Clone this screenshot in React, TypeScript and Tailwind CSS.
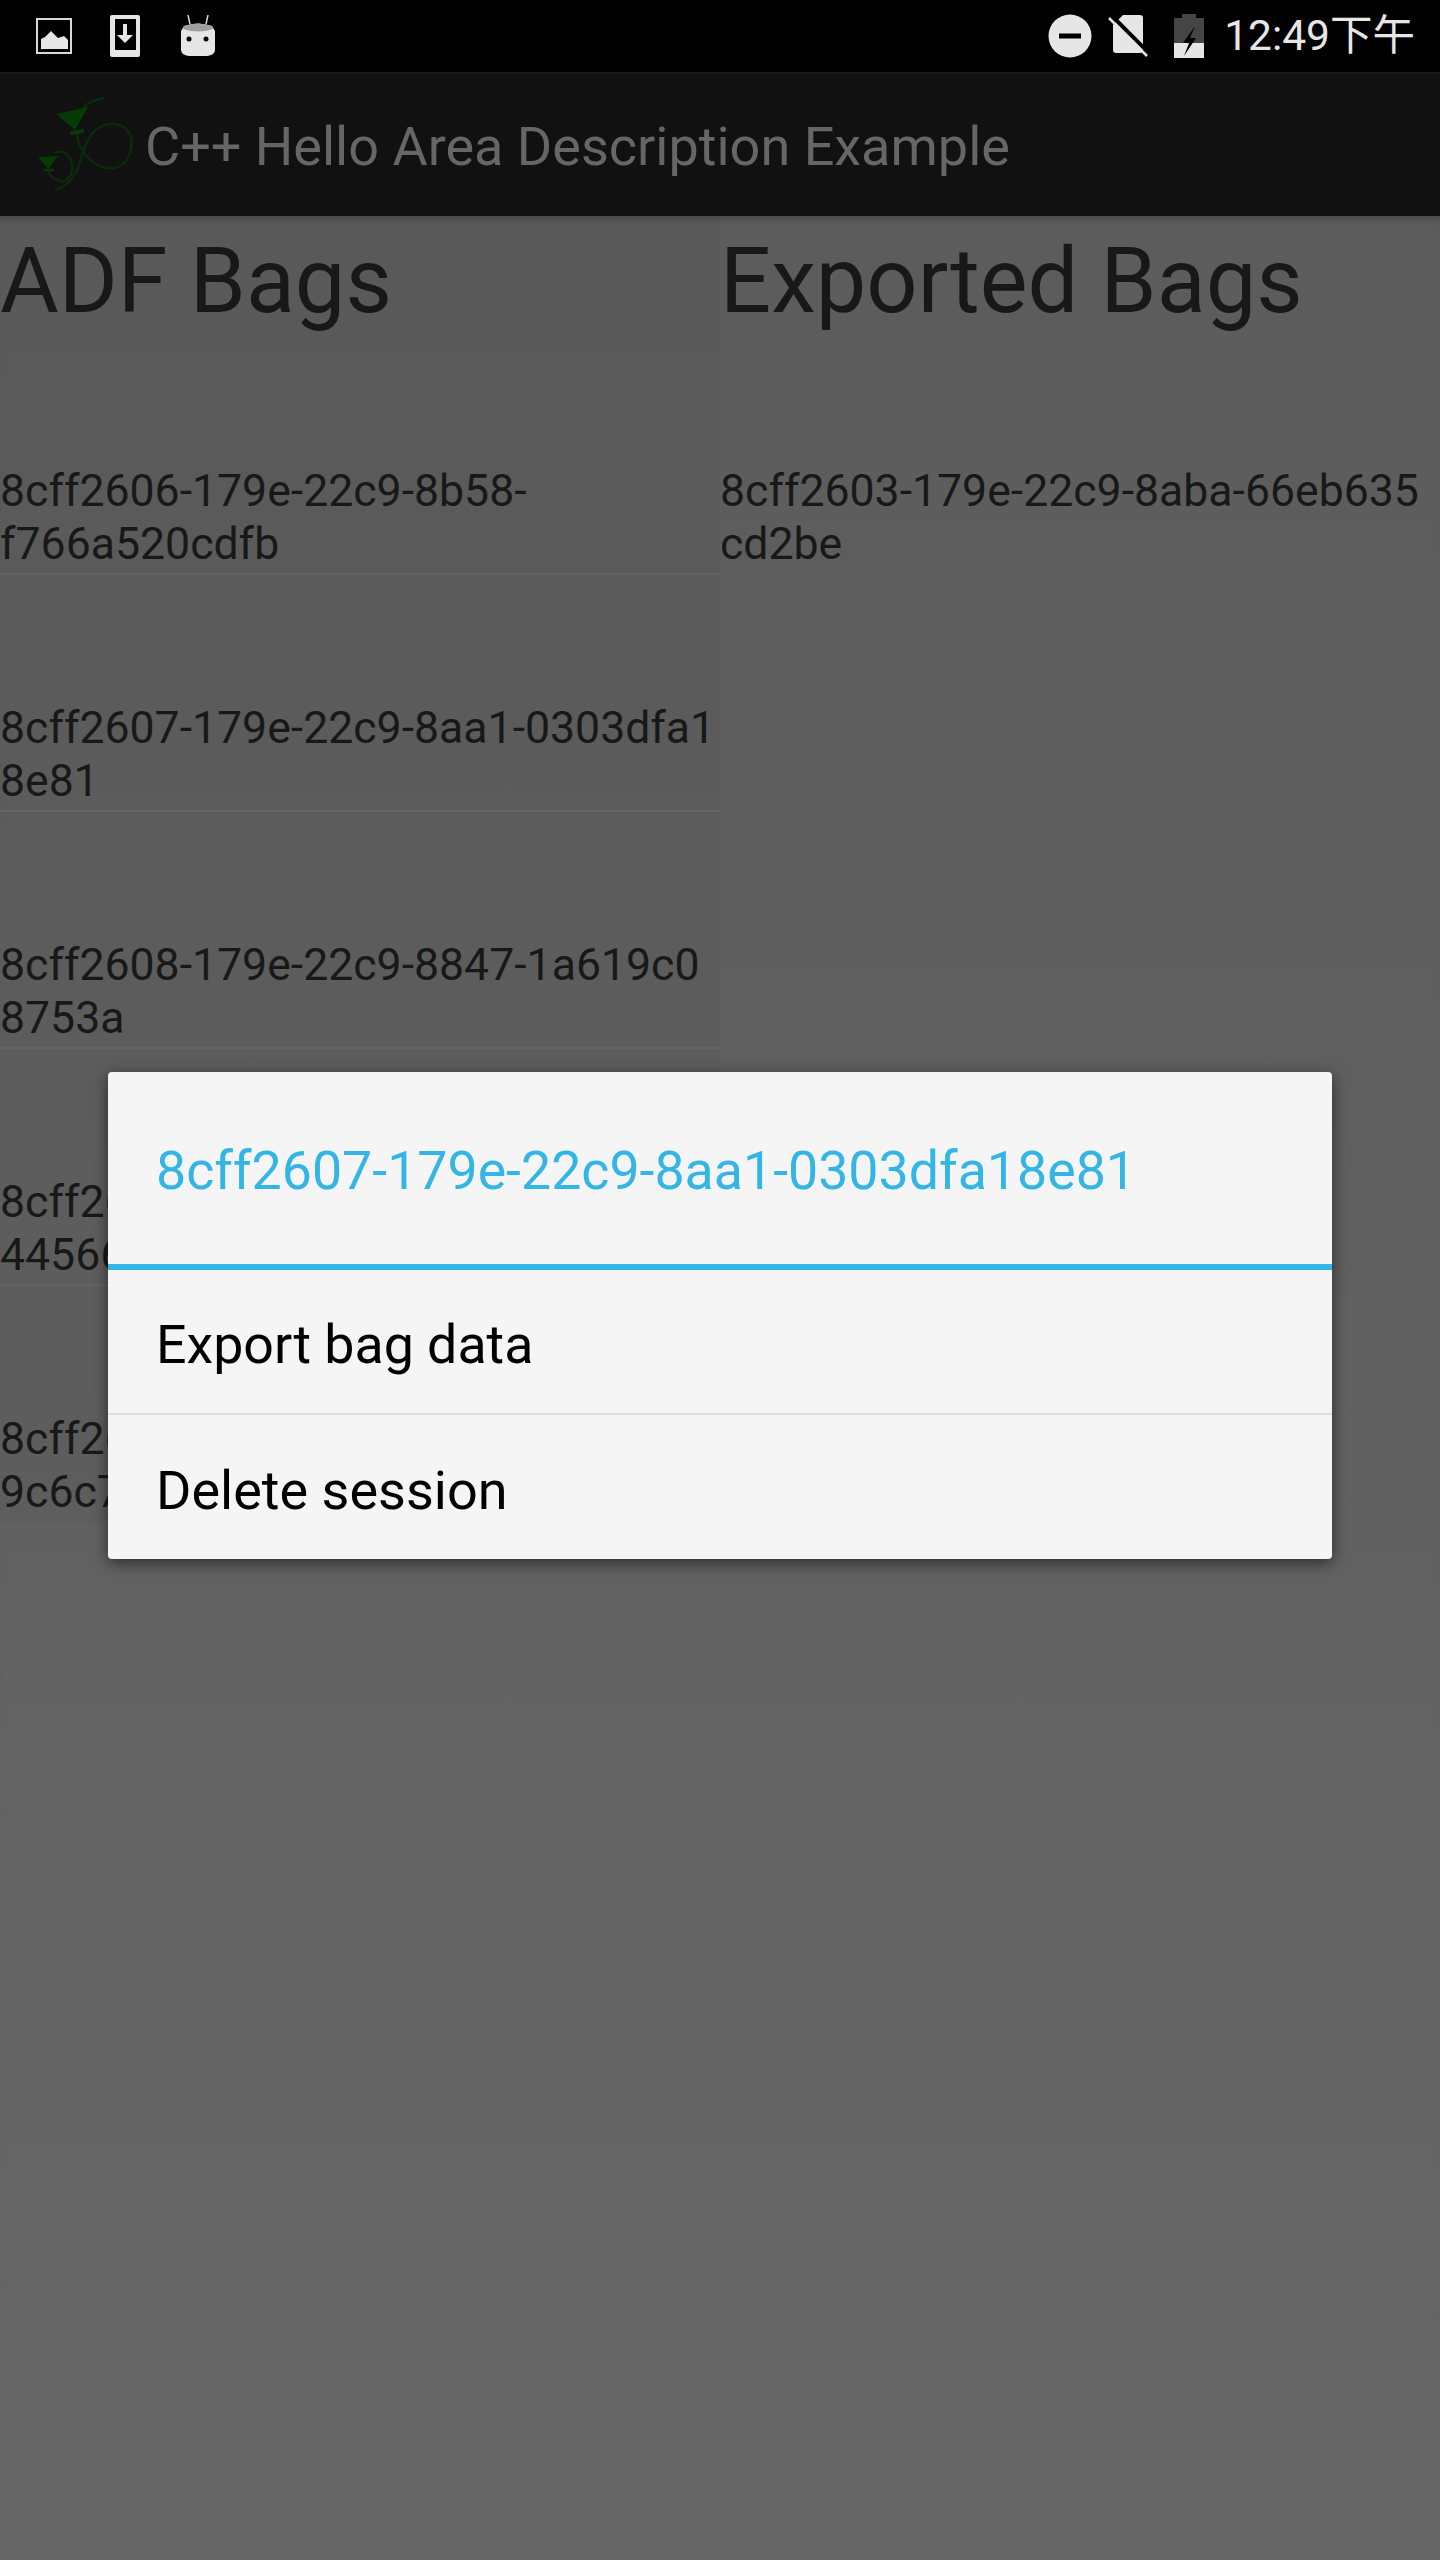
const adfBags = [
  ["8cff2606-179e-22c9-8b58-", "f766a520cdfb"],
  ["8cff2607-179e-22c9-8aa1-0303dfa1", "8e81"],
  ["8cff2608-179e-22c9-8847-1a619c0", "8753a"],
  ["8cff2609-179e-22c9-8c21-77ab30e", "44566c"],
  ["8cff260a-179e-22c9-8d02-51fe2b4", "9c6c7a"],
];

function StatusLeftIcons() {
  return (
    <div className="flex items-center">
      <svg width="36" height="36" viewBox="0 0 36 36" className="ml-[36px]">
        <rect x="1" y="1" width="34" height="34" fill="none" stroke="#d8d8d8" strokeWidth="2" />
        <path d="M5 31V21l4-2 6-6 7 7 6-2 4 4v9z" fill="#e6e6e6" />
      </svg>
      <svg width="30" height="42" viewBox="0 0 30 42" className="ml-[38px]">
        <path
          fillRule="evenodd"
          d="M2 0h26a2 2 0 0 1 2 2v38a2 2 0 0 1-2 2H2a2 2 0 0 1-2-2V2a2 2 0 0 1 2-2zM5 4v31h21V4z"
          fill="#e6e6e6"
        />
        <path d="M13 9h4v11h6l-8 8-8-8h6z" fill="#e6e6e6" />
      </svg>
      <svg width="34" height="42" viewBox="0 0 34 42" className="ml-[41px]">
        <path d="M7 0l2 9M27 0l-2 9" stroke="#d8d8d8" strokeWidth="1.500" />
        <path d="M3 11q14-5 28 0l3 5v19q0 5-8 6H8q-8-1-8-6V16z" fill="#e6e6e6" />
        <path d="M3 11q14-5 28 0l1 3q-15 5-30 0z" fill="#a0a0a0" />
        <circle cx="8" cy="24" r="2.500" fill="#000" />
        <circle cx="25" cy="24" r="2.500" fill="#000" />
      </svg>
    </div>
  );
}

function StatusRightIcons() {
  return (
    <div className="flex items-center">
      <svg width="44" height="44" viewBox="0 0 44 44">
        <circle cx="22" cy="22" r="21.500" fill="#e6e6e6" />
        <rect x="11" y="19.500" width="22" height="5" fill="#000" />
      </svg>
      <svg width="40" height="44" viewBox="0 0 40 44" className="ml-[16px]">
        <path d="M15 1H32a3 3 0 0 1 3 3V36a3 3 0 0 1-3 3H8a3 3 0 0 1-3-3V11z" fill="#e6e6e6" />
        <path d="M4 2L42 40" stroke="#000" strokeWidth="4" />
        <path d="M1 4l38 38" stroke="#e6e6e6" strokeWidth="2.500" />
      </svg>
      <svg width="30" height="44" viewBox="0 0 30 44" className="ml-[26px]">
        <path d="M8 0h14v4h8v25H0V4h8z" fill="#454545" />
        <path d="M0 29h30v15H0z" fill="#e6e6e6" />
        <path d="M21 12L9 29h6l-5 13 12-18h-6z" fill="#000" />
      </svg>
      <span className="ml-[20px] text-[#e6e6e6] text-[42.500px] leading-none font-['Roboto','Noto_Sans_CJK_SC',sans-serif]">
        12:49下午
      </span>
    </div>
  );
}

function AppLogo() {
  return (
    <svg width="104" height="108" viewBox="36 91 104 108" fill="none" className="ml-[36px] shrink-0">
      <path
        d="M104 98C94 100 84 104 80 112M77 133C78 155 98 170 114 168C128 166 133 150 131 138C128 124 112 121 100 127C88 134 84 148 80 162C76 176 68 186 55 190"
        stroke="#0b2a0b"
        strokeWidth="2.500"
      />
      <path
        d="M48 170C50 178 58 182 64 181C72 179 74 166 71 160C68 152 60 150 54 153"
        stroke="#0b2a0b"
        strokeWidth="2.500"
      />
      <path d="M56 114L88 107L75 130z" fill="#063a06" />
      <path d="M70 133.500L84 130.500" stroke="#063a06" strokeWidth="4" />
      <path d="M38 157L58 156L48 169z" fill="#063a06" />
      <path d="M44 170H54" stroke="#063a06" strokeWidth="2.500" />
    </svg>
  );
}

function BagRow({ lines, divider }: { lines: string[]; divider: boolean }) {
  return (
    <div
      className={`h-[237px] flex flex-col justify-end pb-[2px] border-b-2 ${divider ? "border-[#656565]" : "border-transparent"}`}
    >
      {lines.map((line) => (
        <div key={line} className="text-[44.600px] leading-[53px] text-[#181818] whitespace-nowrap">
          {line}
        </div>
      ))}
    </div>
  );
}

function ColumnTitle({ children }: { children: string }) {
  return (
    <div className="h-[122px] pt-[10px] flex items-center text-[90px] text-[#181818] leading-none whitespace-nowrap">
      {children}
    </div>
  );
}

export default function App() {
  return (
    <div className="relative w-[1440px] h-[2560px] overflow-hidden bg-[#666666] font-['Roboto',sans-serif]">
      <div className="h-[72px] bg-black flex items-center justify-between pr-[25px]">
        <StatusLeftIcons />
        <StatusRightIcons />
      </div>

      <div className="h-[144px] bg-[#111111] border-t-2 border-[#1a1a1a] flex items-center">
        <AppLogo />
        <span className="ml-[5px] pt-[2px] text-[54px] text-[#666666] whitespace-nowrap">
          C++ Hello Area Description Example
        </span>
      </div>

      <div className="flex items-start h-[2344px] bg-linear-to-b from-[#5c5c5c] to-[#666666] shadow-[inset_0_10px_8px_-8px_rgba(0,0,0,0.25)]">
        <div className="w-[720px] bg-black/[0.03]">
          <ColumnTitle>ADF Bags</ColumnTitle>
          {adfBags.map((lines, i) => (
            <BagRow key={lines[0]} lines={lines} divider={i < 4} />
          ))}
        </div>
        <div className="w-[720px]">
          <ColumnTitle>Exported Bags</ColumnTitle>
          <BagRow lines={["8cff2603-179e-22c9-8aba-66eb635", "cd2be"]} divider={false} />
        </div>
      </div>

      <div className="absolute left-[108px] top-[1072px] w-[1224px] h-[487px] rounded-[4px] bg-[#f5f5f5] shadow-[0_4px_16px_rgba(0,0,0,0.55)] overflow-hidden">
        <div className="h-[192px] pt-[6px] flex items-center pl-[48px] text-[#33b5e5] text-[53.700px] whitespace-nowrap">
          8cff2607-179e-22c9-8aa1-0303dfa18e81
        </div>
        <div className="h-[6px] bg-[#33b5e5]" />
        <div className="h-[145px] pt-[7px] flex items-center pl-[48px] text-black text-[53.700px] border-b-2 border-[#dcdcdc]">
          Export bag data
        </div>
        <div className="h-[144px] pt-[6px] flex items-center pl-[48px] text-black text-[54px]">
          Delete session
        </div>
      </div>
    </div>
  );
}
